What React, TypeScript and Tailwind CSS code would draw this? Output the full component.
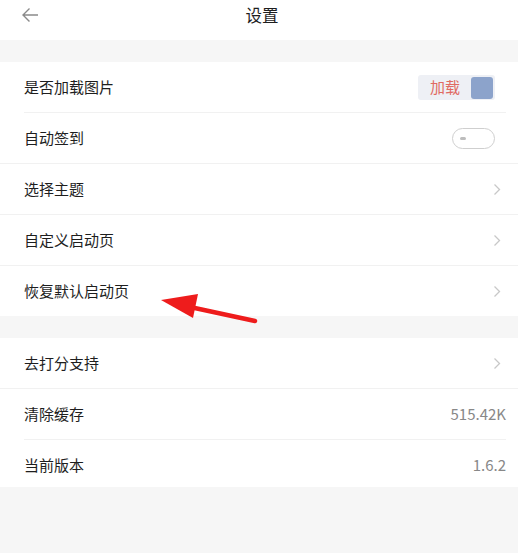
import React from "react";

const font = { fontFamily: '"Noto Sans CJK SC", "Noto Sans", sans-serif' };

function Chevron() {
  return (
    <svg width="8" height="13" viewBox="0 0 8 13" className="mr-[17px]">
      <path d="M1.5 1.5 L6.5 6.5 L1.5 11.5" fill="none" stroke="#c8c8c8" strokeWidth="1.3" />
    </svg>
  );
}

function Row({ label, right, divider, h = "h-[51px]" }: { label: string; right?: React.ReactNode; divider?: "inset" | "full" | "none"; h?: string }) {
  return (
    <div className={`relative ${h} flex items-center justify-between pl-[24px]`}>
      <span className="text-[15px] text-[#1e1e1e]">{label}</span>
      {right}
      {divider === "inset" && <div className="absolute left-[24px] right-[12px] bottom-0 h-px bg-[#f1f1f1]" />}
      {divider === "full" && <div className="absolute left-0 right-0 bottom-0 h-px bg-[#f1f1f1]" />}
    </div>
  );
}

export default function App() {
  return (
    <div className="w-[518px] h-[553px] bg-[#f6f6f6] flex flex-col" style={font}>
      <div className="h-[40px] bg-white relative flex items-center justify-center">
        <svg className="absolute left-[21px] top-[7px]" width="18" height="16" viewBox="0 0 18 16">
          <path d="M17 8 H2 M8.5 1.5 L2 8 L8.5 14.5" fill="none" stroke="#8a8a8a" strokeWidth="1.4" />
        </svg>
        <span className="text-[16.5px] text-[#1e1e1e] -mt-[10px] ml-[6px]">设置</span>
      </div>
      <div className="h-[22px]" />
      <div className="bg-white relative">
        <Row
          label="是否加载图片"
          divider="inset"
          right={
            <div className="mr-[23px] w-[77px] h-[25px] bg-[#eef0f5] rounded-[3px] flex items-center justify-between pl-[12px] pr-[2px]">
              <span className="text-[15px] text-[#e06a62]">加载</span>
              <div className="w-[22px] h-[22px] rounded-[3px] bg-[#8ca3cb]" />
            </div>
          }
        />
        <Row
          label="自动签到"
          divider="full"
          right={
            <div className="mr-[23px] w-[43px] h-[21px] rounded-full border border-[#cfcfcf] flex items-center pl-[7px]">
              <div className="w-[6px] h-[3px] rounded-full bg-[#bdbdbd]" />
            </div>
          }
        />
        <Row label="选择主题" divider="full" right={<Chevron />} />
        <Row label="自定义启动页" divider="full" right={<Chevron />} />
        <Row label="恢复默认启动页" h="h-[50px]" right={<Chevron />} />
        <svg className="absolute left-0 top-0 pointer-events-none" width="518" height="300" viewBox="0 62 518 300">
          <line x1="190" y1="307" x2="255" y2="321" stroke="#ee1c1c" strokeWidth="4.5" strokeLinecap="round" />
          <polygon points="161,300 198,294 193,318" fill="#ee1c1c" />
        </svg>
      </div>
      <div className="h-[22px]" />
      <div className="bg-white">
        <Row label="去打分支持" divider="full" right={<Chevron />} />
        <Row label="清除缓存" divider="inset" right={<span className="mr-[12px] text-[15px] text-[#888]">515.42K</span>} />
        <Row label="当前版本" h="h-[47px] pt-[3px]" right={<span className="mr-[12px] text-[15px] text-[#888]">1.6.2</span>} />
      </div>
    </div>
  );
}
